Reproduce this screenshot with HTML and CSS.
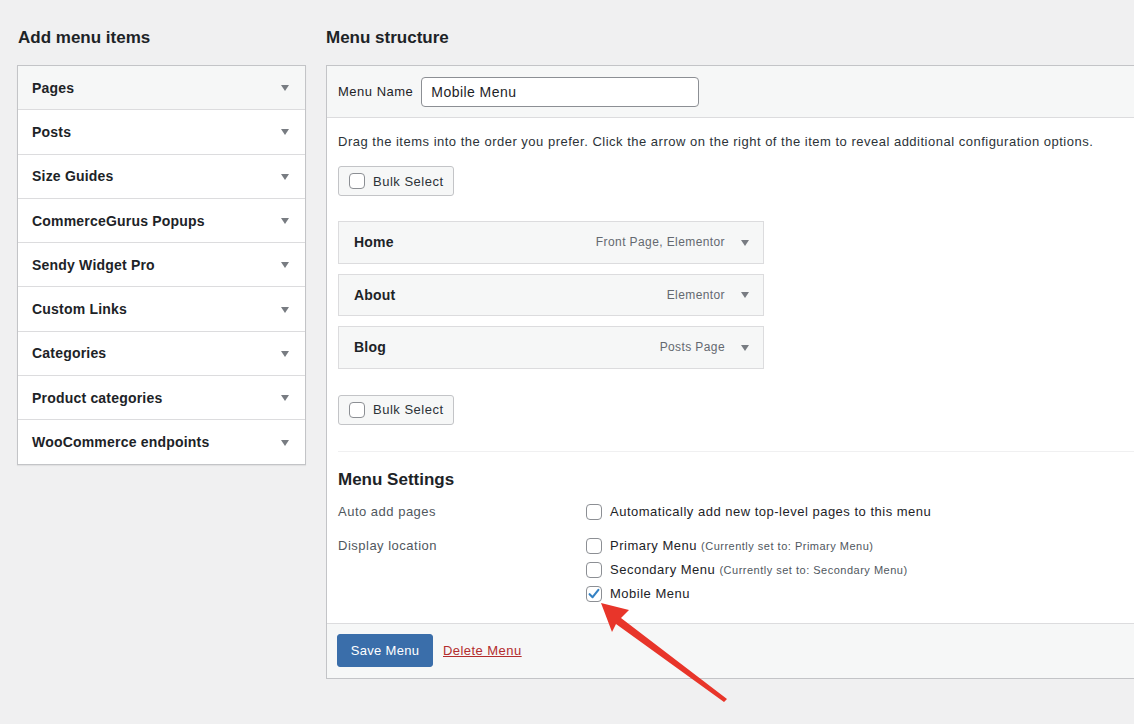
FILE: index.html
```html
<!DOCTYPE html>
<html lang="en">
<head>
<meta charset="utf-8">
<title>Menus</title>
<link rel="stylesheet" href="styles.css">
</head>
<body>
<div class="page">
  <div class="col-left">
    <h2 class="col-title">Add menu items</h2>
    <div class="accordion">
      <div class="acc-item acc-open"><span>Pages</span><i class="tri"></i></div>
      <div class="acc-item"><span>Posts</span><i class="tri"></i></div>
      <div class="acc-item"><span>Size Guides</span><i class="tri"></i></div>
      <div class="acc-item"><span>CommerceGurus Popups</span><i class="tri"></i></div>
      <div class="acc-item"><span>Sendy Widget Pro</span><i class="tri"></i></div>
      <div class="acc-item"><span>Custom Links</span><i class="tri"></i></div>
      <div class="acc-item"><span>Categories</span><i class="tri"></i></div>
      <div class="acc-item"><span>Product categories</span><i class="tri"></i></div>
      <div class="acc-item"><span>WooCommerce endpoints</span><i class="tri"></i></div>
    </div>
  </div>
  <div class="col-right">
    <h2 class="col-title">Menu structure</h2>
    <div class="menu-panel">
      <div class="menu-header">
        <label class="name-label">Menu Name</label>
        <div class="name-input">Mobile Menu</div>
      </div>
      <div class="menu-body">
        <p class="hint">Drag the items into the order you prefer. Click the arrow on the right of the item to reveal additional configuration options.</p>
        <div class="bulk"><span class="cb"></span><span>Bulk Select</span></div>
        <ul class="items">
          <li class="item"><span class="item-title">Home</span><span class="item-meta">Front Page, Elementor</span><i class="tri"></i></li>
          <li class="item"><span class="item-title">About</span><span class="item-meta">Elementor</span><i class="tri"></i></li>
          <li class="item"><span class="item-title">Blog</span><span class="item-meta">Posts Page</span><i class="tri"></i></li>
        </ul>
        <div class="bulk"><span class="cb"></span><span>Bulk Select</span></div>
        <div class="settings">
          <h3 class="settings-title">Menu Settings</h3>
          <div class="set-grid">
            <div class="set-label">Auto add pages</div>
            <div class="set-opts">
              <div class="opt"><span class="cb"></span><span>Automatically add new top-level pages to this menu</span></div>
            </div>
            <div class="set-label loc-label">Display location</div>
            <div class="set-opts locs">
              <div class="opt"><span class="cb"></span><span>Primary Menu <small>(Currently set to: Primary Menu)</small></span></div>
              <div class="opt"><span class="cb"></span><span>Secondary Menu <small>(Currently set to: Secondary Menu)</small></span></div>
              <div class="opt"><span class="cb cb-on"><svg viewBox="0 0 16 16" width="16" height="16"><path d="M3.6 8.2 L6.6 11.2 L12.4 3.8" fill="none" stroke="#3582c4" stroke-width="2.1" stroke-linecap="round" stroke-linejoin="round"/></svg></span><span>Mobile Menu</span></div>
            </div>
          </div>
        </div>
      </div>
      <div class="menu-footer">
        <button class="save-btn">Save Menu</button>
        <a class="delete-link" href="#">Delete Menu</a>
      </div>
    </div>
  </div>
</div>
<svg class="annot" width="1134" height="724" viewBox="0 0 1134 724">
  <polygon points="601,603 629,610 621,618 727,699 724,702 616,624 612,632" fill="#e8352a"/>
</svg>
</body>
</html>
```

FILE: styles.css
```css
* { box-sizing: border-box; }
html, body { margin: 0; padding: 0; }
body {
  background: #f0f0f1;
  font-family: "Liberation Sans", Arial, sans-serif;
  color: #1d2327;
  font-size: 13px;
  letter-spacing: 0.5px;
  overflow: hidden;
  width: 1134px;
  height: 724px;
  position: relative;
}
.page {
  display: flex;
  gap: 20px;
  padding-left: 17px;
}
.col-left { width: 289px; flex: none; }
.col-right { width: 830px; flex: none; }
.col-title {
  margin: 0;
  padding: 27px 0 0 1px;
  height: 65px;
  font-size: 17px;
  font-weight: 600;
  line-height: 22px;
  letter-spacing: 0;
  color: #1d2327;
}
.col-right .col-title { padding-left: 0; }

.accordion {
  background: #fff;
  border: 1px solid #c3c4c7;
  box-shadow: 0 1px 1px rgba(0,0,0,0.06);
}
.acc-item {
  height: 44.3px;
  display: flex;
  align-items: center;
  justify-content: space-between;
  padding: 0 16px 0 14px;
  border-top: 1px solid #dcdcde;
  font-size: 14px;
  font-weight: 700;
  letter-spacing: 0.2px;
  color: #1d2327;
}
.acc-item:first-child { border-top: none; height: 43.3px; }
.acc-open { background: #f6f7f7; }
.tri {
  display: inline-block;
  width: 0; height: 0;
  border-left: 4px solid transparent;
  border-right: 4px solid transparent;
  border-top: 6px solid #787c82;
  margin-top: 1px;
}

.menu-panel {
  background: #fff;
  border: 1px solid #c3c4c7;
  border-right: none;
}
.menu-header {
  height: 52px;
  background: #f6f7f7;
  border-bottom: 1px solid #dcdcde;
  display: flex;
  align-items: center;
  padding-left: 11px;
}
.name-label { font-size: 13px; color: #1d2327; margin-right: 8px; }
.name-input {
  width: 278px;
  height: 30px;
  background: #fff;
  border: 1px solid #8c8f94;
  border-radius: 4px;
  font-size: 14px;
  letter-spacing: 0.45px;
  line-height: 28px;
  padding: 0 9px;
  color: #1d2327;
}
.menu-body { padding: 14px 0 0 11px; }
.hint { margin: 0 0 14px; line-height: 20px; font-size: 13px; color: #2c3338; }
.bulk {
  display: inline-flex;
  align-items: center;
  height: 30px;
  width: 116px;
  padding-left: 10px;
  background: #f6f7f7;
  border: 1px solid #c3c4c7;
  border-radius: 3px;
  font-size: 13px;
  color: #2c3338;
  gap: 8px;
}
.cb {
  display: inline-flex;
  width: 16px; height: 16px;
  flex: none;
  background: #fff;
  border: 1px solid #8c8f94;
  border-radius: 4px;
  align-items: center;
  justify-content: center;
}
.cb svg { display: block; margin: -1px; }
.items { list-style: none; margin: 25px 0 26px; padding: 0; width: 426px; }
.item {
  height: 42.5px;
  margin-bottom: 10px;
  display: flex;
  align-items: center;
  background: #f6f7f7;
  border: 1px solid #dcdcde;
  padding: 0 14px 0 15px;
}
.item:last-child { margin-bottom: 0; }
.item-title { font-size: 14px; font-weight: 700; letter-spacing: 0.2px; color: #1d2327; flex: 1; }
.item-meta { font-size: 12px; letter-spacing: 0.4px; color: #646970; margin-right: 16px; }

.settings {
  margin-top: 26px;
  border-top: 1px solid #f0f0f1;
  padding-top: 17px;
}
.settings-title {
  margin: 0 0 11px;
  font-size: 17px;
  font-weight: 600;
  line-height: 22px;
  letter-spacing: 0;
}
.set-grid {
  display: grid;
  grid-template-columns: 248px 1fr;
  row-gap: 14px;
  padding-bottom: 19px;
}
.set-label { font-size: 13px; color: #50575e; line-height: 20px; padding-top: 0; }
.set-opts { display: flex; flex-direction: column; gap: 4px; }
.opt { display: flex; align-items: center; gap: 8px; height: 20px; font-size: 13px; color: #1d2327; }
.opt small { font-size: 11px; letter-spacing: 0.5px; color: #50575e; }

.menu-footer {
  background: #f6f7f7;
  border-top: 1px solid #dcdcde;
  border-bottom: 1px solid #c3c4c7;
  margin-bottom: -1px;
  padding: 10px 10px 11px;
  display: flex;
  align-items: center;
  gap: 10px;
}
.save-btn {
  height: 33px;
  width: 96px;
  background: #3a6eaa;
  color: #fff;
  border: 1px solid #3a6eaa;
  border-radius: 3px;
  font-family: inherit;
  font-size: 13px;
  letter-spacing: 0.3px;
  padding: 0;
}
.delete-link { color: #b32d2e; font-size: 13px; letter-spacing: 0.45px; text-decoration: underline; }

.annot { position: absolute; left: 0; top: 0; pointer-events: none; }
```
